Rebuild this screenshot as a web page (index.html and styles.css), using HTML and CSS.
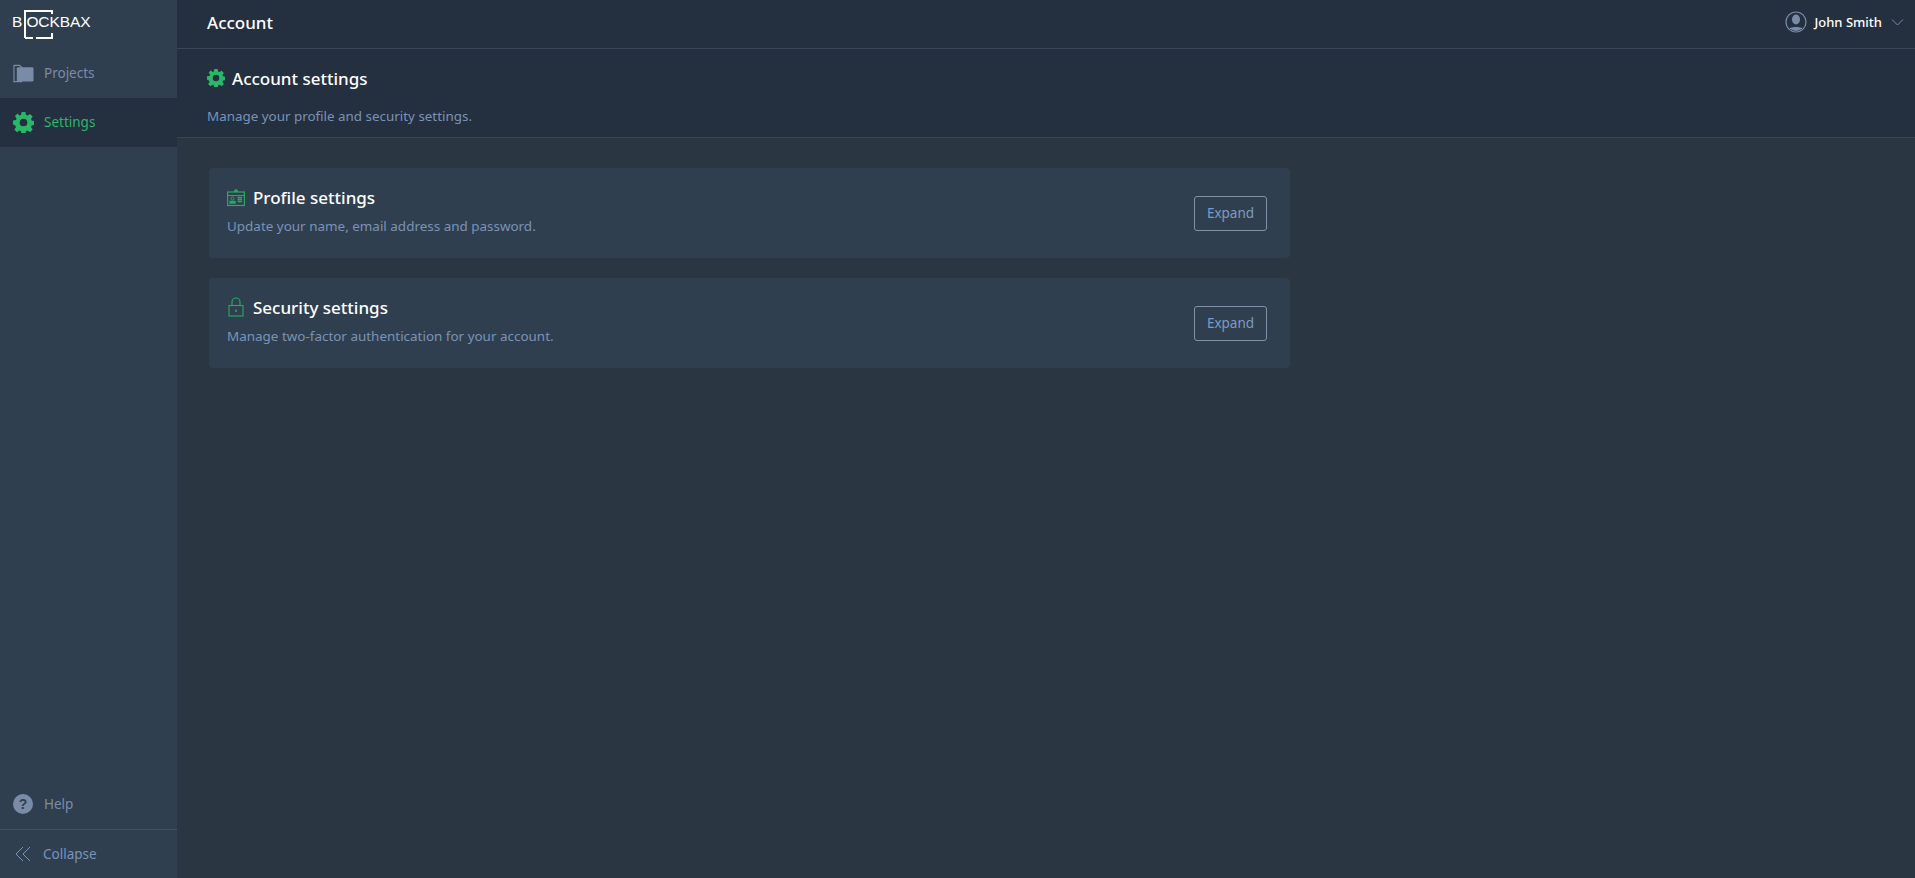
FILE: index.html
```html
<!DOCTYPE html>
<html lang="en">
<head>
<meta charset="utf-8">
<title>Account settings</title>
<link rel="stylesheet" href="styles.css">
</head>
<body>
<div class="app">
  <aside class="sidebar">
    <div class="logo"><span class="logo-text">B<span class="logo-l">L</span>OCKBAX</span>
      <svg class="logo-frame" viewBox="0 0 29 29"><path d="M1 28V1h27v3M1 28h8M12 28h16v-5" fill="none" stroke="#fff" stroke-width="2"/></svg>
    </div>
    <a class="nav-item">
      <svg class="nav-icon" viewBox="0 0 22 20"><path d="M1 1.500h6l2 2v15H1z" fill="none" stroke="#7a8ba8" stroke-width="1.200"/><path d="M5 3.500h15a1.500 1.500 0 0 1 1.500 1.500v12a1.500 1.500 0 0 1-1.500 1.500H4V4.500z" fill="#7a8ba8"/></svg>
      <span>Projects</span>
    </a>
    <a class="nav-item active">
      <svg class="nav-icon" viewBox="0 0 24 24"><use href="#gear"/></svg>
      <span>Settings</span>
    </a>
    <div class="spacer"></div>
    <a class="nav-item help">
      <svg class="nav-icon" viewBox="0 0 20 20"><circle cx="10" cy="10" r="10" fill="#7a8ba8"/><text x="10" y="15" text-anchor="middle" class="help-mark">?</text></svg>
      <span>Help</span>
    </a>
    <a class="nav-item collapse">
      <svg class="nav-icon" viewBox="0 0 16 16"><path d="M8 1L1 8l7 7M15 1L8 8l7 7" fill="none" stroke="#7a93b5" stroke-width="1"/></svg>
      <span>Collapse</span>
    </a>
  </aside>
  <div class="main">
    <header class="topbar">
      <h1>Account</h1>
      <div class="user">
        <svg class="avatar" viewBox="0 0 22 22"><defs><clipPath id="clip"><circle cx="11" cy="11" r="9"/></clipPath></defs><circle cx="11" cy="11" r="10" fill="none" stroke="#7a8ba8" stroke-width="1.200"/><g clip-path="url(#clip)" fill="#7a8ba8"><ellipse cx="11" cy="8.500" rx="4" ry="5"/><path d="M2 22c0-5 4-6 9-6s9 1 9 6z"/></g></svg>
        <span class="user-name">John Smith</span>
        <svg class="chevron" viewBox="0 0 12 7"><path d="M.5.500L6 6l5.500-5.500" fill="none" stroke="#7a8ba8" stroke-width="1"/></svg>
      </div>
    </header>
    <section class="page-head">
      <div class="page-title">
        <svg class="title-icon" viewBox="0 0 24 24"><use href="#gear"/></svg>
        <h2>Account settings</h2>
      </div>
      <p>Manage your profile and security settings.</p>
    </section>
    <section class="cards">
      <article class="card">
        <div>
          <div class="card-title">
            <svg class="card-icon" viewBox="0 0 18 18"><path d="M7 3V2.200a2 2 0 0 1 4 0V3" fill="#27a960"/><rect x=".6" y="3" width="16.800" height="13.500" fill="none" stroke="#27a960" stroke-width="1.200"/><path d="M1 6.500h16" stroke="#27a960" stroke-width="1"/><circle cx="5.500" cy="9.500" r="1.500" fill="none" stroke="#27a960"/><path d="M3 14v-1.500h5V14zM10.500 8.500H15M10.500 10.500H15M10.500 12.500H15" fill="none" stroke="#27a960" stroke-width="1.300"/></svg>
            <h3>Profile settings</h3>
          </div>
          <p>Update your name, email address and password.</p>
        </div>
        <button class="expand">Expand</button>
      </article>
      <article class="card">
        <div>
          <div class="card-title">
            <svg class="card-icon lock" viewBox="0 0 16 20"><path d="M4 9V5a4 4 0 0 1 8 0v4" fill="none" stroke="#27a960" stroke-width="1.100"/><rect x="1" y="8.500" width="14" height="10.500" fill="none" stroke="#27a960" stroke-width="1.100"/><rect x="7.300" y="12.500" width="1.500" height="2.500" fill="#27a960"/></svg>
            <h3>Security settings</h3>
          </div>
          <p>Manage two-factor authentication for your account.</p>
        </div>
        <button class="expand">Expand</button>
      </article>
    </section>
  </div>
</div>
<svg class="defs" aria-hidden="true"><defs><path id="gear" fill-rule="evenodd" d="M9.800 0h4.400l.6 3.300 1.900.8L19.500 2.200l3 3-1.900 2.700.8 1.900 3.300.6v4.400l-3.300.6-.8 1.900 1.900 2.700-3 3-2.800-1.900-1.900.8-.6 3.300H9.800l-.6-3.300-1.900-.8-2.800 1.900-3-3 1.900-2.700-.8-1.900L0 14.200V9.800l3.300-.6.8-1.900L2.200 4.600l3-2.800 2.100 2.300 1.900-.8zM12 7.600a4.400 4.400 0 1 0 0 8.800 4.400 4.400 0 0 0 0-8.800z"/></defs></svg>
</body>
</html>
```
FILE: styles.css
```css
* { box-sizing: border-box; }
html, body { margin: 0; height: 100%; }
body {
  font-family: "Noto Sans", "Open Sans", sans-serif;
  background: #2b3643;
  color: #fff;
  overflow: hidden;
}
h1, h2, h3, p { margin: 0; font-weight: 400; }
.defs { width: 0; height: 0; display: block; }
.app { display: flex; height: 878px; }
.sidebar {
  width: 177px;
  flex: none;
  display: flex;
  flex-direction: column;
  background: #303f4f;
  color: #7a8ba8;
  font-size: 13.500px;
}
.logo {
  height: 49px;
  padding: 13px 0 0 12px;
  display: flex;
  position: relative;
}
.logo-text {
  font-family: "Liberation Sans", sans-serif;
  font-size: 15.500px;
  line-height: 18px;
  letter-spacing: -.1px;
  color: #fff;
}
.logo-l { color: transparent; letter-spacing: -4.500px; }
.logo-frame {
  position: absolute;
  left: 24px;
  top: 10px;
  width: 29px;
  height: 29px;
}
.nav-item {
  height: 49px;
  padding-left: 13px;
  display: flex;
  align-items: center;
  gap: 10px;
}
.nav-item span { line-height: 20px; margin-bottom: 1px; }
.nav-icon { width: 21px; height: 21px; flex: none; fill: currentColor; }
.active { background: #242f40; color: #29b868; }
.spacer { flex: 1; }
.help { height: 51px; padding-top: 1px; }
.help span { margin-bottom: 0; }
.help .nav-icon { width: 20px; height: 20px; margin-right: 1px; }
.help-mark { font-family: "Liberation Sans", sans-serif; font-size: 14px; font-weight: 700; fill: #303f4f; }
.collapse {
  height: 49px;
  border-top: 1px solid #44525f;
  color: #7a93b5;
  gap: 12px;
  padding-left: 15px;
}
.collapse span { margin-bottom: 0; }
.collapse .nav-icon { width: 16px; height: 16px; }
.main { flex: 1; display: flex; flex-direction: column; min-width: 0; }
.topbar {
  height: 49px;
  flex: none;
  background: #242f40;
  border-bottom: 1px solid #3a4758;
  display: flex;
  align-items: center;
  justify-content: space-between;
  padding: 0 11px 4px 30px;
}
.topbar h1 { font-size: 17px; font-weight: 500; }
.user { display: flex; align-items: center; }
.avatar { width: 22px; height: 22px; margin-right: 8px; }
.user-name { font-size: 13px; font-weight: 500; }
.chevron { width: 13px; height: 7px; margin-left: 9px; }
.page-head {
  height: 89px;
  flex: none;
  background: #242f40;
  border-bottom: 1px solid #3a4758;
  padding: 17px 30px 0;
}
.page-title { display: flex; align-items: center; gap: 7px; height: 24px; }
.title-icon { width: 18px; height: 18px; fill: #29b868; }
.page-title h2 { font-size: 17px; font-weight: 500; }
.page-head p { margin-top: 17px; font-size: 13.400px; line-height: 18px; color: #7a93b5; }
.cards {
  width: 1081px;
  margin: 30px 0 0 32px;
  display: flex;
  flex-direction: column;
  gap: 20px;
}
.card {
  height: 90px;
  background: #303f4f;
  border-radius: 4px;
  display: flex;
  align-items: center;
  justify-content: space-between;
  padding: 0 23px 5px 18px;
}
.card-title { display: flex; align-items: center; gap: 8px; height: 24px; }
.card-icon { width: 18px; height: 18px; }
.card-icon.lock { width: 18px; height: 20px; margin-bottom: 2px; }
.card-title h3 { font-size: 17px; font-weight: 500; margin-bottom: 2px; }
.card p { margin-top: 7px; font-size: 13.450px; line-height: 18px; color: #7a93b5; }
.expand {
  width: 73px;
  height: 35px;
  padding: 0;
  margin-top: 5px;
  background: transparent;
  border: 1px solid #8292a8;
  border-radius: 3px;
  color: #7a9cc4;
  font: 13.500px "Noto Sans", sans-serif;
}
```
